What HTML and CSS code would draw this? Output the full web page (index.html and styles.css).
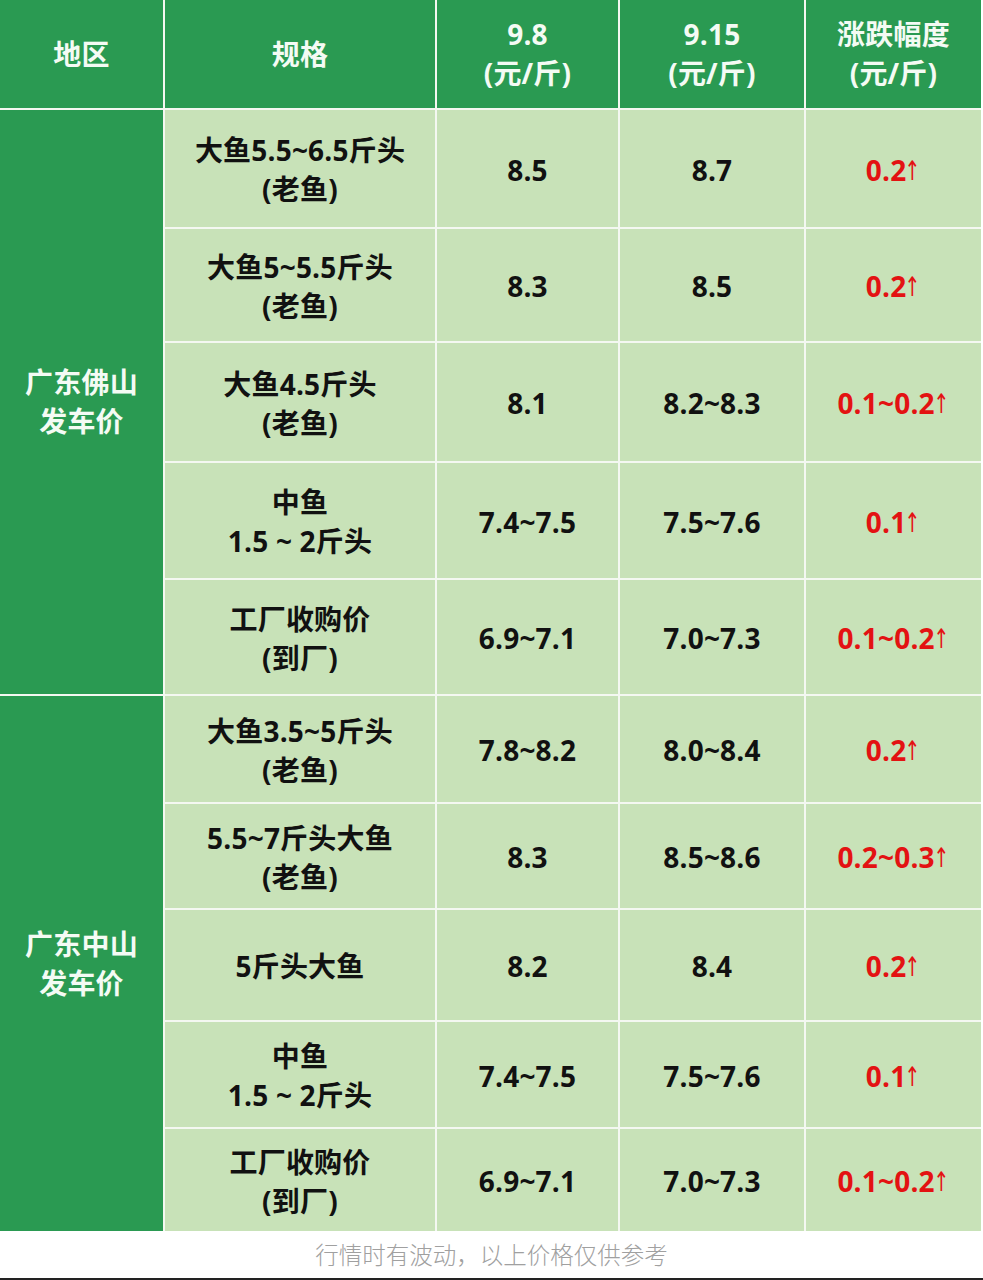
FILE: index.html
```html
<!DOCTYPE html>
<html lang="zh">
<head>
<meta charset="utf-8">
<link rel="stylesheet" href="styles.css">
</head>
<body>
<div class="page">
  <div class="table">
    <div class="cell head">地区</div>
    <div class="cell head">规格</div>
    <div class="cell head">9.8<br>(元/斤)</div>
    <div class="cell head">9.15<br>(元/斤)</div>
    <div class="cell head">涨跌幅度<br>(元/斤)</div>

    <div class="cell region r1">广东佛山<br>发车价</div>
    <div class="cell">大鱼5.5~6.5斤头<br>(老鱼)</div>
    <div class="cell">8.5</div>
    <div class="cell">8.7</div>
    <div class="cell up">0.2<span class="arr">↑</span></div>

    <div class="cell">大鱼5~5.5斤头<br>(老鱼)</div>
    <div class="cell">8.3</div>
    <div class="cell">8.5</div>
    <div class="cell up">0.2<span class="arr">↑</span></div>

    <div class="cell">大鱼4.5斤头<br>(老鱼)</div>
    <div class="cell">8.1</div>
    <div class="cell">8.2~8.3</div>
    <div class="cell up">0.1~0.2<span class="arr">↑</span></div>

    <div class="cell">中鱼<br>1.5 ~ 2斤头</div>
    <div class="cell">7.4~7.5</div>
    <div class="cell">7.5~7.6</div>
    <div class="cell up">0.1<span class="arr">↑</span></div>

    <div class="cell">工厂收购价<br>(到厂)</div>
    <div class="cell">6.9~7.1</div>
    <div class="cell">7.0~7.3</div>
    <div class="cell up">0.1~0.2<span class="arr">↑</span></div>

    <div class="cell region r2">广东中山<br>发车价</div>
    <div class="cell">大鱼3.5~5斤头<br>(老鱼)</div>
    <div class="cell">7.8~8.2</div>
    <div class="cell">8.0~8.4</div>
    <div class="cell up">0.2<span class="arr">↑</span></div>

    <div class="cell">5.5~7斤头大鱼<br>(老鱼)</div>
    <div class="cell">8.3</div>
    <div class="cell">8.5~8.6</div>
    <div class="cell up">0.2~0.3<span class="arr">↑</span></div>

    <div class="cell">5斤头大鱼</div>
    <div class="cell">8.2</div>
    <div class="cell">8.4</div>
    <div class="cell up">0.2<span class="arr">↑</span></div>

    <div class="cell">中鱼<br>1.5 ~ 2斤头</div>
    <div class="cell">7.4~7.5</div>
    <div class="cell">7.5~7.6</div>
    <div class="cell up">0.1<span class="arr">↑</span></div>

    <div class="cell">工厂收购价<br>(到厂)</div>
    <div class="cell">6.9~7.1</div>
    <div class="cell">7.0~7.3</div>
    <div class="cell up">0.1~0.2<span class="arr">↑</span></div>
  </div>
  <div class="note">行情时有波动，以上价格仅供参考</div>
</div>
</body>
</html>
```

FILE: styles.css
```css
html, body {
  margin: 0;
  padding: 0;
  background: #ffffff;
}

.page {
  width: 983px;
  height: 1280px;
  box-sizing: border-box;
  border-bottom: 2px solid #222;
  display: flex;
  flex-direction: column;
  font-family: "Open Sans", "Noto Sans CJK SC", sans-serif;
}

.table {
  display: grid;
  width: 981px;
  grid-template-columns: 163px 270px 181px 184px 175px;
  grid-template-rows: 108px 117px 112px 118px 115px 114px 106px 104px 110px 105px 102px;
  gap: 2px;
  background: #f4f8f1;
}

.cell {
  display: flex;
  align-items: center;
  justify-content: center;
  text-align: center;
  background: #c8e2b8;
  color: #111;
  font-weight: 700;
  font-size: 28px;
  line-height: 39px;
  letter-spacing: 0.2px;
  padding-top: 3px;
}

.head {
  background: #2a9a52;
  color: #f4fbf4;
  padding-top: 0;
}

.region {
  background: #2a9a52;
  color: #f4fbf4;
  padding-top: 0;
}

.r1 {
  grid-row: 2 / span 5;
  grid-column: 1;
}

.r2 {
  grid-row: 7 / span 5;
  grid-column: 1;
}

.up {
  color: #e31212;
}

.arr {
  display: inline-block;
  font-family: "DejaVu Sans", sans-serif;
  font-weight: 400;
  font-size: 27px;
  transform: scaleX(0.7);
  margin-left: -5px;
  margin-right: -3px;
}

.note {
  flex: 1;
  display: flex;
  align-items: center;
  justify-content: center;
  color: #a0a0a0;
  font-family: "Noto Sans CJK SC", sans-serif;
  font-size: 23.5px;
  font-weight: 300;
  padding-bottom: 2px;
}
```
